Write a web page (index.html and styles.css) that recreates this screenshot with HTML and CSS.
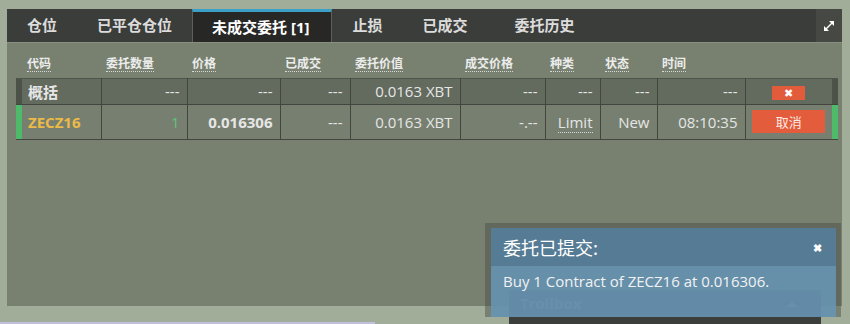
FILE: index.html
```html
<!DOCTYPE html>
<html lang="zh">
  <head>
    <meta charset="UTF-8" />
    <title>未成交委托</title>
    <link rel="stylesheet" href="styles.css">
  </head>
  <body>
    <div class="panel">
      <div class="tabs">
        <div class="tab">仓位</div>
        <div class="tab">已平仓仓位</div>
        <div class="tab active">未成交委托 [1]</div>
        <div class="tab">止损</div>
        <div class="tab">已成交</div>
        <div class="tab">委托历史</div>
        <div class="expand">
          <svg width="14" height="14" viewBox="0 0 14 14">
            <line x1="3" y1="11" x2="11" y2="3" stroke="#fff" stroke-width="1.4" />
            <polygon points="7,2 12,2 12,7" fill="#fff" />
            <polygon points="2,7 2,12 7,12" fill="#fff" />
          </svg>
        </div>
      </div>

      <table class="orders">
        <colgroup>
          <col style="width: 6px" />
          <col style="width: 79px" />
          <col style="width: 86px" />
          <col style="width: 93px" />
          <col style="width: 70px" />
          <col style="width: 110px" />
          <col style="width: 85px" />
          <col style="width: 55px" />
          <col style="width: 57px" />
          <col style="width: 88px" />
          <col style="width: 87px" />
          <col style="width: 6px" />
        </colgroup>
        <thead>
          <tr>
            <th></th>
            <th><span>代码</span></th>
            <th><span>委托数量</span></th>
            <th><span>价格</span></th>
            <th><span>已成交</span></th>
            <th><span>委托价值</span></th>
            <th><span>成交价格</span></th>
            <th><span>种类</span></th>
            <th><span>状态</span></th>
            <th><span>时间</span></th>
            <th></th>
            <th></th>
          </tr>
        </thead>
        <tbody>
          <tr class="summary">
            <td class="bar"></td>
            <td class="left strong">概括</td>
            <td>---</td>
            <td>---</td>
            <td>---</td>
            <td>0.0163 XBT</td>
            <td>---</td>
            <td>---</td>
            <td>---</td>
            <td>---</td>
            <td class="center"><button class="btn-x">&#x2716;</button></td>
            <td class="bar"></td>
          </tr>
          <tr class="order">
            <td class="bar buy"></td>
            <td class="left symbol">ZECZ16</td>
            <td class="qty">1</td>
            <td class="strong">0.016306</td>
            <td>---</td>
            <td>0.0163 XBT</td>
            <td>-.--</td>
            <td><span class="dotted">Limit</span></td>
            <td>New</td>
            <td>08:10:35</td>
            <td class="center"><button class="btn-cancel">取消</button></td>
            <td class="bar buy"></td>
          </tr>
        </tbody>
      </table>
    </div>
    <div class="strip"></div>

    <div class="trollbox">
      <span>Trollbox</span>
      <span class="caret"></span>
    </div>

    <div class="toast">
      <div class="toast-title">
        <span>委托已提交:</span>
        <span class="toast-close">&#x2716;</span>
      </div>
      <div class="toast-body">Buy 1 Contract of ZECZ16 at 0.016306.</div>
    </div>
  </body>
</html>
```

FILE: styles.css
```css
* {
  margin: 0;
  padding: 0;
  box-sizing: border-box;
}

body {
  font-family: "Open Sans", "Noto Sans CJK SC", sans-serif;
  background-color: #a1ad98;
  color: #e6e6e6;
  position: relative;
  width: 850px;
  height: 324px;
  overflow: hidden;
}

.panel {
  margin: 9px 0 0 7px;
  width: 835px;
  height: 297px;
  background-color: #78816f;
}

.tabs {
  display: flex;
  height: 34px;
  background-color: #3b3d3a;
  border-bottom: 1px solid #899080;
}

.tab {
  padding: 0 20px;
  font-size: 15px;
  font-weight: bold;
  line-height: 33px;
  color: #dcdcdc;
}

.tab:nth-child(5) {
  padding-right: 27px;
}

.tab.active {
  background-color: #272826;
  color: #fff;
  border-top: 3px solid #3aa0c7;
  border-left: 1px solid #5c6058;
  border-right: 1px solid #5c6058;
  padding: 0 22px 0 19px;
  line-height: 30px;
}

.expand {
  margin-left: auto;
  width: 26px;
  background-color: #464844;
  display: flex;
  align-items: center;
  justify-content: center;
}

.orders {
  margin: 5px 0 0 9px;
  width: 822px;
  border-collapse: collapse;
  table-layout: fixed;
  font-size: 15px;
}

.orders th {
  height: 30px;
  text-align: left;
  vertical-align: top;
  padding: 7px 0 0 5px;
  font-size: 12px;
  font-weight: bold;
  color: #ececec;
}

.orders th span {
  display: inline-block;
  line-height: 15px;
  border-bottom: 1px dotted #d8d8d8;
}

.orders td {
  text-align: right;
  padding: 0 7px;
  border-left: 1px solid #42463f;
  white-space: nowrap;
}

.orders tbody tr {
  border-bottom: 1px solid #42463f;
}

.summary {
  height: 26px;
  background-color: #636a5e;
  border-top: 1px solid #50554c;
}

.order {
  height: 35px;
  background-color: #778070;
}

.orders td.bar {
  padding: 0;
  border-left: none;
  background-color: #4d5249;
}

.orders td.bar.buy {
  background-color: #4dbb6a;
}

.orders td.left {
  text-align: left;
  padding-left: 6px;
  border-left: none;
}

.orders td.center {
  text-align: center;
  padding: 0;
}

.strong {
  font-weight: bold;
}

.symbol {
  color: #ebba47;
  font-weight: bold;
}

.qty {
  color: #62c27c;
}

.dotted {
  border-bottom: 1px dotted #d8d8d8;
}

.btn-x {
  width: 33px;
  height: 14px;
  border: none;
  background-color: #e25b3b;
  color: #fff;
  font-size: 11px;
  line-height: 14px;
}

.btn-cancel {
  width: 73px;
  height: 23px;
  border: none;
  background-color: #e35c3b;
  color: #fbe9e4;
  font-family: "Noto Sans CJK SC", sans-serif;
  font-size: 13px;
}

.strip {
  margin-top: 16px;
  width: 375px;
  height: 2px;
  background-color: #c1bfdc;
}

.trollbox {
  position: absolute;
  left: 509px;
  top: 290px;
  width: 312px;
  height: 40px;
  background-color: #3b3e3a;
  display: flex;
  justify-content: space-between;
  padding: 3px 24px 0 11px;
  font-size: 15px;
  font-weight: bold;
  color: #7f9bb0;
}

.caret {
  margin-top: 9px;
  width: 0;
  height: 0;
  border-left: 5px solid transparent;
  border-right: 5px solid transparent;
  border-bottom: 5px solid #7f9cb0;
}

.toast {
  position: absolute;
  left: 485px;
  top: 223px;
  width: 356px;
  height: 94px;
  padding: 5px 5px 0 6px;
  background-color: rgba(70, 74, 66, 0.45);
}

.toast-title {
  height: 38px;
  background-color: #567b94;
  display: flex;
  justify-content: space-between;
  align-items: center;
  padding: 0 14px 0 12px;
  font-family: "Noto Sans CJK SC", sans-serif;
  font-size: 18px;
  color: #fff;
}

.toast-close {
  font-size: 11px;
  font-weight: bold;
}

.toast-body {
  height: 51px;
  background-color: rgba(103, 147, 178, 0.9);
  padding: 5px 12px 0;
  font-size: 15px;
  color: #f2f2f2;
}
```
